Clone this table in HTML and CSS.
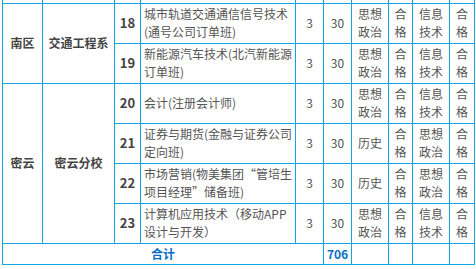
FILE: index.html
```html
<!DOCTYPE html>
<html lang="zh-CN">
<head>
<meta charset="utf-8">
<link rel="stylesheet" href="styles.css">
</head>
<body>
<div class="wrap">
<table class="plan">
<colgroup>
<col class="c-region"><col class="c-school"><col class="c-no"><col class="c-major"><col class="c-yr"><col class="c-num"><col class="c-subj"><col class="c-grade"><col class="c-subj"><col class="c-grade2">
</colgroup>
<tbody>
<tr class="stub"><td></td><td></td><td></td><td></td><td></td><td></td><td></td><td></td><td></td><td></td></tr>
<tr>
<td class="group" rowspan="2">南区</td>
<td class="group" rowspan="2">交通工程系</td>
<td class="no">18</td>
<td class="major">城市轨道交通通信信号技术(通号公司订单班)</td>
<td>3</td><td>30</td>
<td>思想政治</td><td>合格</td><td>信息技术</td><td>合格</td>
</tr>
<tr>
<td class="no">19</td>
<td class="major">新能源汽车技术(北汽新能源订单班)</td>
<td>3</td><td>30</td>
<td>思想政治</td><td>合格</td><td>信息技术</td><td>合格</td>
</tr>
<tr>
<td class="group" rowspan="4">密云</td>
<td class="group" rowspan="4">密云分校</td>
<td class="no">20</td>
<td class="major">会计(注册会计师)</td>
<td>3</td><td>30</td>
<td>思想政治</td><td>合格</td><td>信息技术</td><td>合格</td>
</tr>
<tr>
<td class="no">21</td>
<td class="major">证券与期货(金融与证券公司定向班)</td>
<td>3</td><td>30</td>
<td>历史</td><td>合格</td><td>思想政治</td><td>合格</td>
</tr>
<tr>
<td class="no">22</td>
<td class="major">市场营销(物美集团“管培生项目经理”储备班)</td>
<td>3</td><td>30</td>
<td>历史</td><td>合格</td><td>思想政治</td><td>合格</td>
</tr>
<tr>
<td class="no">23</td>
<td class="major">计算机应用技术（移动APP设计与开发）</td>
<td>3</td><td>30</td>
<td>思想政治</td><td>合格</td><td>信息技术</td><td>合格</td>
</tr>
<tr class="total">
<td colspan="5" class="hl">合计</td>
<td class="hl">706</td>
<td></td><td></td><td></td><td></td>
</tr>
</tbody>
</table>
</div>
</body>
</html>
```

FILE: styles.css
```css
html, body {
  margin: 0;
  padding: 0;
  background: #fff;
}
.wrap {
  padding-left: 2px;
}
.plan {
  border-collapse: collapse;
  table-layout: fixed;
  width: 473px;
  font-family: "Noto Sans CJK SC", "Microsoft YaHei", sans-serif;
  font-size: 12px;
  line-height: 18px;
  color: #555;
}
.c-region { width: 40px; }
.c-school { width: 72px; }
.c-no { width: 26px; }
.c-major { width: 155px; }
.c-yr { width: 28px; }
.c-num { width: 28px; }
.c-subj { width: 37px; }
.c-grade { width: 24px; }
.c-grade2 { width: 25px; }
.plan td {
  border: 1px solid #10a6e4;
  height: 40px;
  padding: 0 5px;
  text-align: center;
  vertical-align: middle;
  box-sizing: border-box;
}
.plan tr.stub td {
  border-top: none;
  height: 3px;
  padding: 0;
  font-size: 0;
  line-height: 0;
}
.plan td.major {
  text-align: left;
  padding: 0 0 0 3px;
}
.plan td.no,
.plan td.group {
  font-weight: bold;
  color: #444;
  padding: 0 2px;
}
.plan td.no {
  font-size: 13px;
}
.plan tr.total td {
  height: 21px;
  padding: 0;
}
.plan td.hl {
  color: #0a6cc4;
  font-weight: bold;
}
```
